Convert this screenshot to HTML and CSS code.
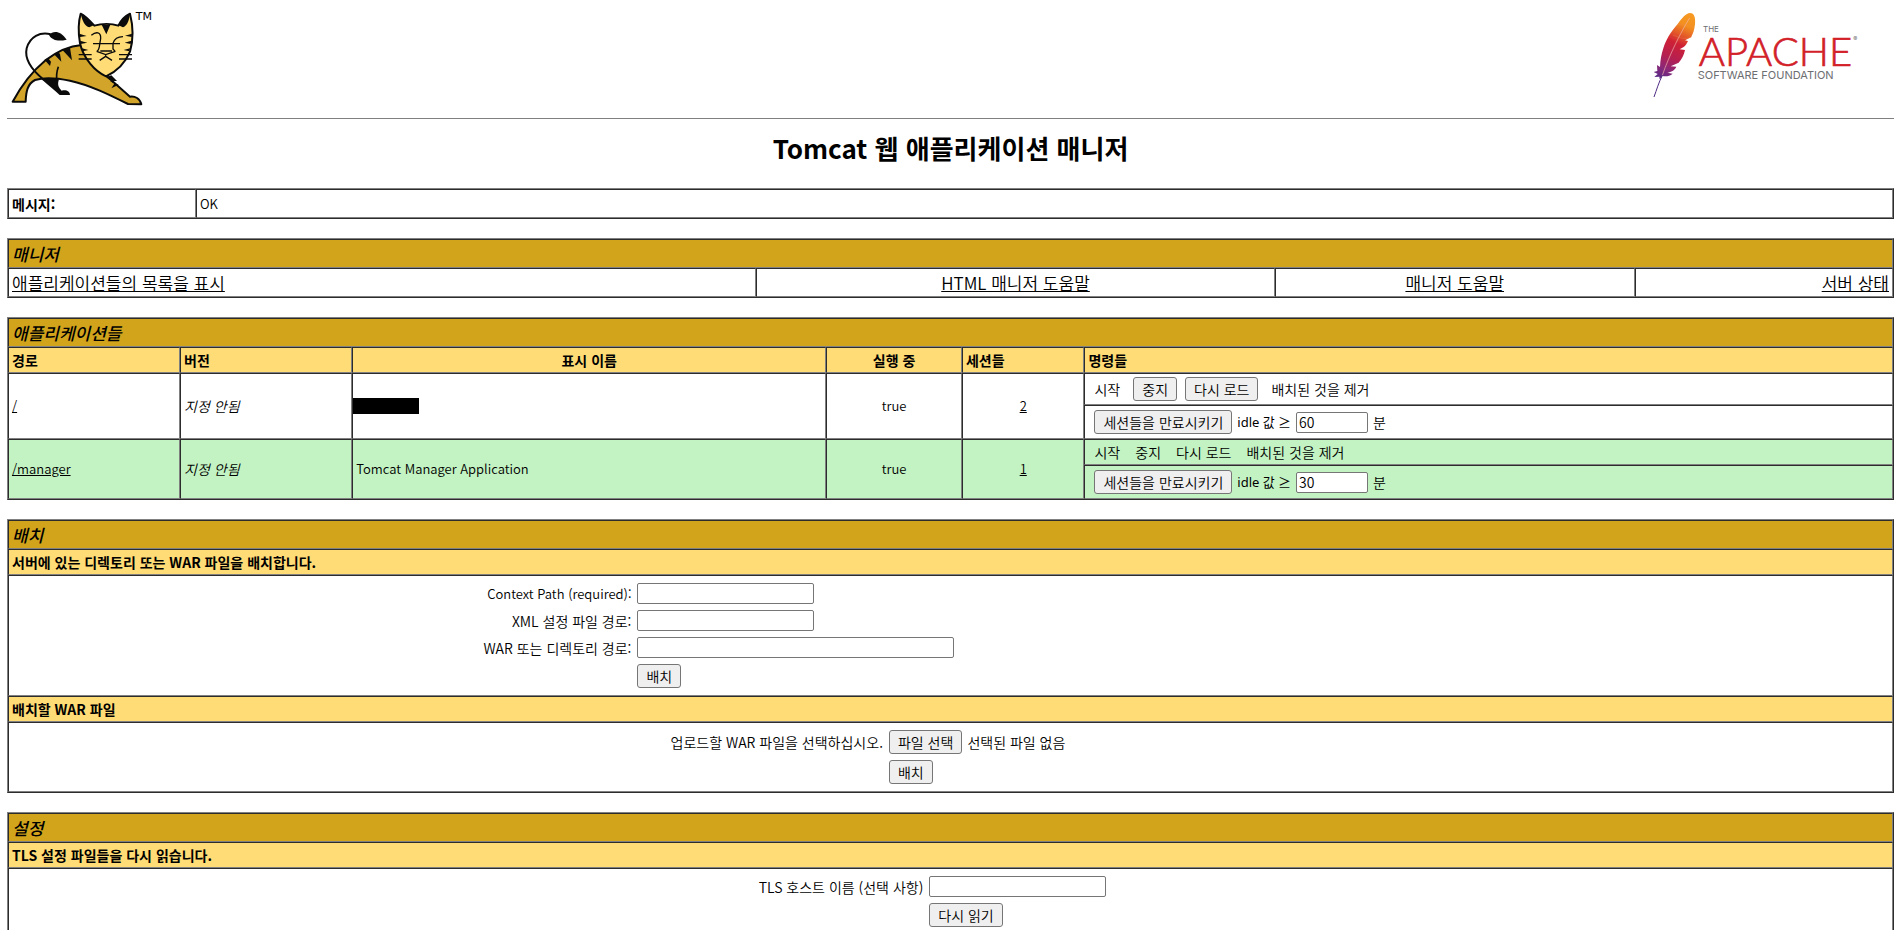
FILE: index.html
```
<!DOCTYPE html>
<html lang="ko">
<head>
    <meta charset="UTF-8">
    <title>/manager</title>
    <link rel="stylesheet" href="styles.css">
</head>
<body>
    <header class="page-header">
        <a href="#tomcat">
            <svg class="tomcat-logo" viewBox="21 24 441 300" role="img" aria-label="The Tomcat Servlet/JSP Container">
                <path d="M38 305 C65 255 95 215 135 182 C170 155 205 138 245 135 L320 228 L390 290 C405 288 420 295 424 313 L384 312 C330 285 270 255 210 242 C170 234 130 232 105 240 C82 252 78 275 77 305 Z" fill="#d2a52a" stroke="#0b0b0b" stroke-width="6" stroke-linejoin="round"/>
                <path d="M124 237 C145 234 160 234 177 238 C172 252 174 262 185 272 C198 268 210 274 210 285 L179 285 C163 270 145 257 124 237 Z" fill="#0b0b0b"/>
                <path d="M175 200 C170 215 168 228 171 242" fill="none" stroke="#0b0b0b" stroke-width="5"/>
                <path d="M132 240 C95 210 72 180 80 145 C90 110 120 95 152 103" fill="none" stroke="#0b0b0b" stroke-width="6"/>
                <path d="M147 105 C160 90 182 92 200 119 C178 124 158 124 147 105 Z" fill="#0b0b0b"/>
                <path d="M134 180 L150 198 L153 185 L144 174 Z M162 163 L184 185 L180 162 L174 156 Z M188 151 L216 181 L210 143 Z" fill="#0b0b0b"/>
                <path d="M318 232 L334 226 L351 243 L330 243 L338 248 L356 254 L334 265 L344 250 Z" fill="#0b0b0b"/>
                <path d="M242 41 C257 48 272 65 283 77 C305 70 335 70 355 77 C362 63 375 48 390 41 C400 80 400 120 390 155 C375 190 350 215 318 229 C285 215 250 175 240 130 C234 95 235 65 242 41 Z" fill="#ffdc75" stroke="#0b0b0b" stroke-width="6" stroke-linejoin="round"/>
                <path d="M242 41 C257 46 271 61 281 76 L268 82 C254 78 248 64 242 41 Z M390 41 C375 48 362 61 355 76 L369 82 C383 75 387 62 390 41 Z M305 74 L331 74 L319 103 Z" fill="#0b0b0b"/>
                <path d="M238 101 L260 108 L240 111 Z M240 122 L262 128 L242 132 Z M396 101 L375 107 L395 111 Z M394 122 L374 128 L392 132 Z M246 145 L265 150 L248 154 Z M390 145 L371 150 L388 154 Z" fill="#0b0b0b"/>
                <path d="M274 106 C288 94 303 95 302 115 L298 140 C296 150 294 153 290 154 M369 110 C355 110 343 117 339 130 L339 147 L346 155 M279 131 H360 M290 154 L317 164 L346 154 M301 153 L336 153 M317 163 V169 M299 181 L317 169 L336 181 M236 164 H275 M236 177 H275 M357 164 H396 M357 177 H396" fill="none" stroke="#0b0b0b" stroke-width="4"/>
                <text class="trademark" x="407" y="60">TM</text>
            </svg>
        </a>
        <a href="#apache">
            <svg class="asf-logo" viewBox="39 24 723 300" role="img" aria-label="The Apache Software Foundation">
                <defs>
                    <linearGradient id="feather" x1="150" y1="39" x2="62" y2="235" gradientUnits="userSpaceOnUse">
                        <stop offset="0" stop-color="#f79a23"/>
                        <stop offset=".18" stop-color="#f3901f"/>
                        <stop offset=".34" stop-color="#e2542a"/>
                        <stop offset=".46" stop-color="#cf2035"/>
                        <stop offset=".68" stop-color="#b51f51"/>
                        <stop offset=".85" stop-color="#8b2878"/>
                        <stop offset="1" stop-color="#5b2a86"/>
                    </linearGradient>
                </defs>
                <path d="M150 39 C163 39 167 53 165 73 C163 90 160 100 153 112 L135 121 L144 123 C140 132 136 138 131 141 L119 148 L135 150 C132 165 124 180 116 188 L92 199 L109 200 C103 212 94 216 82 218 L98 221 C88 230 76 230 67 228 L59 238 L58 230 L43 231 L53 222 L41 216 L52 213 L51 195 L60 201 C61 180 64 163 70 145 C77 121 92 95 113 72 C126 54 138 39 150 39 Z" fill="url(#feather)"/>
                <path d="M149 54 C123 95 88 165 67 226" fill="none" stroke="#f2b6ae" stroke-width="2"/>
                <path d="M99 105 C119 112 132 122 156 110 M113 75 C132 68 148 75 163 85" fill="none" stroke="#f28a50" stroke-width="1"/>
                <path d="M67 226 C56 248 50 269 42 291" fill="none" stroke="#4f2b84" stroke-width="3"/>
                <text class="asf-small" x="189" y="96">THE</text>
                <text class="asf-name" x="176" y="198">APACHE</text>
                <text class="asf-line" x="173" y="236">SOFTWARE FOUNDATION</text>
                <text class="asf-mark" x="640" y="124">®</text>
            </svg>
        </a>
    </header>
    <hr class="rule">

    <h1 class="heading">Tomcat 웹 애플리케이션 매니저</h1>

    <table class="box">
        <tr>
            <th class="message-label" scope="row">메시지:</th>
            <td class="message"><pre>OK</pre></td>
        </tr>
    </table>

    <table class="box">
        <colgroup>
            <col class="col-list">
            <col class="col-html">
            <col class="col-help">
            <col>
        </colgroup>
        <tr>
            <th class="title" colspan="4">매니저</th>
        </tr>
        <tr class="links">
            <td><a href="#list">애플리케이션들의 목록을 표시</a></td>
            <td class="center"><a href="#html-help">HTML 매니저 도움말</a></td>
            <td class="center"><a href="#help">매니저 도움말</a></td>
            <td class="right"><a href="#status">서버 상태</a></td>
        </tr>
    </table>

    <table class="box">
        <colgroup>
            <col class="col-path">
            <col class="col-path">
            <col class="col-name">
            <col class="col-running">
            <col class="col-sessions">
            <col>
        </colgroup>
        <tr>
            <th class="title" colspan="6">애플리케이션들</th>
        </tr>
        <tr class="subtitle">
            <th>경로</th>
            <th>버전</th>
            <th class="center">표시 이름</th>
            <th class="center">실행 중</th>
            <th>세션들</th>
            <th>명령들</th>
        </tr>
        <tr>
            <td rowspan="2" class="latin"><a href="#root">/</a></td>
            <td rowspan="2"><i>지정 안됨</i></td>
            <td rowspan="2" class="redacted"><span class="bar"></span></td>
            <td rowspan="2" class="center latin">true</td>
            <td rowspan="2" class="center latin"><a href="#root-sessions">2</a></td>
            <td>
                <div class="actions">
                    <span>시작</span>
                    <button type="button">중지</button>
                    <button type="button">다시 로드</button>
                    <span>배치된 것을 제거</span>
                </div>
            </td>
        </tr>
        <tr>
            <td>
                <form class="expire">
                    <button type="button">세션들을 만료시키기</button>
                    <label for="idle-root">idle 값 ≥</label>
                    <input type="text" id="idle-root" class="idle" value="60">
                    <span>분</span>
                </form>
            </td>
        </tr>
        <tr class="even">
            <td rowspan="2" class="latin"><a href="#manager">/manager</a></td>
            <td rowspan="2"><i>지정 안됨</i></td>
            <td rowspan="2" class="latin">Tomcat Manager Application</td>
            <td rowspan="2" class="center latin">true</td>
            <td rowspan="2" class="center latin"><a href="#manager-sessions">1</a></td>
            <td>
                <div class="actions plain">
                    <span>시작</span>
                    <span>중지</span>
                    <span>다시 로드</span>
                    <span>배치된 것을 제거</span>
                </div>
            </td>
        </tr>
        <tr class="even">
            <td>
                <form class="expire">
                    <button type="button">세션들을 만료시키기</button>
                    <label for="idle-manager">idle 값 ≥</label>
                    <input type="text" id="idle-manager" class="idle" value="30">
                    <span>분</span>
                </form>
            </td>
        </tr>
    </table>

    <table class="box">
        <tr>
            <th class="title">배치</th>
        </tr>
        <tr class="subtitle">
            <th>서버에 있는 디렉토리 또는 WAR 파일을 배치합니다.</th>
        </tr>
        <tr>
            <td>
                <form class="fields deploy">
                    <label for="context-path" class="latin">Context Path (required):</label>
                    <input type="text" id="context-path">
                    <label for="xml-path">XML 설정 파일 경로:</label>
                    <input type="text" id="xml-path">
                    <label for="war-path">WAR 또는 디렉토리 경로:</label>
                    <input type="text" id="war-path" class="wide">
                    <button type="button">배치</button>
                </form>
            </td>
        </tr>
        <tr class="subtitle">
            <th>배치할 WAR 파일</th>
        </tr>
        <tr>
            <td>
                <form class="fields upload">
                    <label for="war-file">업로드할 WAR 파일을 선택하십시오.</label>
                    <div class="file">
                        <input type="file" id="war-file" class="file-input">
                        <label for="war-file" class="button">파일 선택</label>
                        <span>선택된 파일 없음</span>
                    </div>
                    <button type="button">배치</button>
                </form>
            </td>
        </tr>
    </table>

    <table class="box">
        <tr>
            <th class="title">설정</th>
        </tr>
        <tr class="subtitle">
            <th>TLS 설정 파일들을 다시 읽습니다.</th>
        </tr>
        <tr>
            <td>
                <form class="fields tls">
                    <label for="tls-host">TLS 호스트 이름 (선택 사항)</label>
                    <input type="text" id="tls-host">
                    <button type="button">다시 읽기</button>
                </form>
            </td>
        </tr>
    </table>
</body>
</html>
```
FILE: styles.css
```
* {
    box-sizing: border-box;
}

body {
    margin: 8px 6px 8px 7px;
    background: white;
    color: black;
    font-family: "Noto Sans CJK KR", sans-serif;
    font-size: 14px;
    font-weight: 350;
    line-height: 18px;
}

a {
    color: black;
}

.page-header {
    display: flex;
    justify-content: space-between;
}

.page-header a,
.page-header svg {
    display: block;
}

.tomcat-logo {
    width: 147px;
    height: 100px;
}

.asf-logo {
    width: 241px;
    height: 100px;
}

.trademark {
    font-family: "DejaVu Sans", sans-serif;
    font-size: 33px;
    font-weight: 400;
}

.asf-name {
    font-family: Lato, sans-serif;
    font-weight: 300;
    font-size: 120px;
    fill: #d22128;
    stroke: #d22128;
    stroke-width: 2px;
}

.asf-small,
.asf-line,
.asf-mark {
    font-family: Inter, sans-serif;
    font-weight: 400;
    font-size: 24px;
    fill: #6d6e71;
}

.asf-line {
    font-size: 33px;
}

.asf-mark {
    font-size: 18px;
}

.rule {
    height: 1px;
    margin: 10px 0 0;
    border: none;
    background: gray;
}

.heading {
    margin: 12px 0 24px;
    font-size: 26px;
    line-height: 33px;
    text-align: center;
}

/* tables */

.box {
    width: 100%;
    margin-bottom: 19px;
    border: 1px outset gray;
    border-collapse: separate;
    border-spacing: 0;
    table-layout: fixed;
}

.box th,
.box td {
    padding: 3px;
    border: 1px inset gray;
    text-align: left;
}

.box .center {
    text-align: center;
}

.box .right {
    text-align: right;
}

.box .title {
    background: #d2a41c;
    font-size: 17px;
    line-height: 21px;
    font-style: italic;
    font-weight: 500;
}

.links {
    font-size: 17px;
    line-height: 21px;
}

.subtitle {
    background: #ffdc75;
}

.even {
    background: #c3f3c3;
}

.latin {
    font-size: 13px;
}

.message-label {
    width: 188px;
}

.message pre {
    margin: 0;
    font-family: "Noto Sans CJK KR", monospace;
    font-size: 13px;
    line-height: 21px;
}

.col-list {
    width: 39.7%;
}

.col-html {
    width: 27.5%;
}

.col-help {
    width: 19.1%;
}

.col-path {
    width: 9.13%;
}

.col-name {
    width: 25.15%;
}

.col-running {
    width: 7.2%;
}

.col-sessions {
    width: 6.5%;
}

.box .redacted {
    padding-left: 0;
}

.bar {
    display: block;
    width: 66px;
    height: 16px;
    background: black;
}

/* controls */

button,
.button,
input {
    font: inherit;
    color: black;
    border: 1px solid #767676;
    border-radius: 3px;
}

button,
.button {
    height: 24px;
    padding: 0 8px;
    background: #efefef;
    line-height: 22px;
}

input {
    width: 177px;
    height: 21px;
    padding: 0 2px;
    background: white;
    border-radius: 2px;
}

.wide {
    width: 317px;
}

.idle {
    width: 72px;
}

.actions,
.expire,
.file {
    display: flex;
    align-items: center;
}

.actions {
    gap: 8px;
    padding-left: 1px;
}

.actions span {
    padding: 0 5px;
}

.plain {
    gap: 5px;
}

.expire {
    gap: 5px;
    padding: 1px 0 1px 6px;
}

.expire label {
    font-family: "Noto Sans", "Noto Sans CJK KR", sans-serif;
    font-size: 13px;
    font-weight: 400;
}

.fields {
    display: grid;
    gap: 6px;
    padding: 4px 0;
    align-items: center;
    justify-items: start;
}

.fields > label {
    justify-self: end;
}

.fields > button {
    grid-column: 2;
}

.deploy {
    grid-template-columns: 33% 1fr;
}

.upload {
    grid-template-columns: 46.4% 1fr;
}

.tls {
    grid-template-columns: 48.55% 1fr;
}

.file {
    gap: 5px;
}

.file-input {
    position: absolute;
    width: 1px;
    height: 1px;
    opacity: 0;
}
```
